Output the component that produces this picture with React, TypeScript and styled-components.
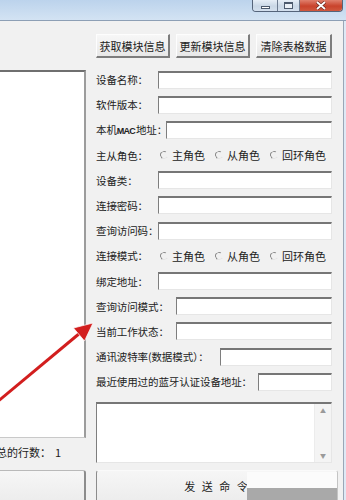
import styled, { createGlobalStyle } from 'styled-components';

const GlobalStyle = createGlobalStyle`
  * {
    box-sizing: border-box;
  }

  body {
    margin: 0;
    background: #dfe9f5;
    font-family: "Noto Sans CJK SC", "Noto Sans", sans-serif;
    color: #222;
  }
`;

const textRows = [
  { label: '设备名称：', w: 62 },
  { label: '软件版本：', w: 62 },
  { label: 'mac', w: 70 },
  { label: '主从角色：', radio: true },
  { label: '设备类：', w: 62 },
  { label: '连接密码：', w: 62 },
  { label: '查询访问码：', w: 62 },
  { label: '连接模式：', radio: true },
  { label: '绑定地址：', w: 62 },
  { label: '查询访问模式：', w: 80 },
  { label: '当前工作状态：', w: 80 },
  { label: '通讯波特率(数据模式）：', w: 124 },
  { label: '最近使用过的蓝牙认证设备地址：', w: 162 },
];

const roles = ['主角色', '从角色', '回环角色'];

export default function App() {
  return (
    <>
      <GlobalStyle />
      <Screen>
        <TitleBar>
          <Controls>
            <CtrlButton $kind='min'>
              <MinGlyph />
            </CtrlButton>
            <CtrlButton $kind='max'>
              <MaxGlyph />
            </CtrlButton>
            <CtrlButton $kind='close'>
              <svg width='12' height='9' viewBox='0 0 12 9'>
                <path d='M2 1 L10 8 M10 1 L2 8' stroke='#6b2a20' strokeWidth='3.2' />
                <path d='M2 1 L10 8 M10 1 L2 8' stroke='#fff' strokeWidth='1.8' />
              </svg>
            </CtrlButton>
          </Controls>
        </TitleBar>

        <Client>
          <LeftCol>
            <ListBox />
            <CountRow>
              <span>总的行数：</span>
              <span>1</span>
            </CountRow>
            <LeftButton />
          </LeftCol>

          <RightCol>
            <Toolbar>
              <ToolButton $w={74}>获取模块信息</ToolButton>
              <ToolButton $w={74}>更新模块信息</ToolButton>
              <ToolButton $w={76}>清除表格数据</ToolButton>
            </Toolbar>

            <Form>
              {textRows.map((row, i) =>
                row.radio ? (
                  <Row key={i}>
                    <Label $w={64}>{row.label}</Label>
                    <RadioGroup>
                      {roles.map((r) => (
                        <RadioItem key={r}>
                          <RadioDot />
                          {r}
                        </RadioItem>
                      ))}
                    </RadioGroup>
                  </Row>
                ) : (
                  <Row key={i}>
                    <Label $w={row.w ?? 62}>
                      {row.label === 'mac' ? (
                        <>
                          本机<Mac>MAC</Mac>地址：
                        </>
                      ) : (
                        row.label
                      )}
                    </Label>
                    <Field />
                  </Row>
                )
              )}
            </Form>

            <Memo>
              <ScrollBar>
                <ArrowGlyph>▲</ArrowGlyph>
                <ArrowGlyph>▼</ArrowGlyph>
              </ScrollBar>
            </Memo>

            <SendButton>发 送 命 令</SendButton>
          </RightCol>
        </Client>

        <Pointer width='346' height='500' viewBox='0 0 346 500'>
          <line x1='-4' y1='403' x2='80' y2='333' stroke='rgba(255,255,255,0.85)' strokeWidth='6' />
          <line x1='-4' y1='403' x2='80' y2='333' stroke='#d21e1e' strokeWidth='3' />
          <polygon points='93,323 84.5,341 73.5,328' fill='#d21e1e' stroke='rgba(255,255,255,0.7)' strokeWidth='1' />
        </Pointer>

        <Watermark>
          <WatermarkTop />
          <WatermarkBottom />
        </Watermark>
      </Screen>
    </>
  );
}

const Screen = styled.div`
  position: relative;
  width: 346px;
  height: 500px;
  overflow: hidden;
  display: flex;
  flex-direction: column;
`;

const TitleBar = styled.div`
  height: 21px;
  flex: none;
  display: flex;
  justify-content: flex-end;
  align-items: flex-start;
  padding-right: 3px;
  background: linear-gradient(to bottom, #bcd3ec, #d3e3f3);
  border-bottom: 1px solid #8d9fb5;
`;

const Controls = styled.div`
  display: flex;
  border: 1px solid #55647a;
  border-top: none;
  border-radius: 0 0 4px 4px;
  overflow: hidden;
  height: 12px;
`;

const CtrlButton = styled.div<{ $kind: 'min' | 'max' | 'close' }>`
  width: ${({ $kind }) => ($kind === 'close' ? '43px' : $kind === 'min' ? '24px' : '22px')};
  height: 100%;
  display: grid;
  place-items: center;
  background: ${({ $kind }) =>
    $kind === 'close'
      ? 'linear-gradient(to bottom, #e0806d, #c9432c 55%, #d0583e)'
      : 'linear-gradient(to bottom, #e6eef7, #c9d7e6 55%, #d4e0ee)'};
  border-left: ${({ $kind }) => ($kind === 'min' ? 'none' : '1px solid #6c7b90')};
`;

const MinGlyph = styled.div`
  width: 9px;
  height: 3px;
  margin-top: 3px;
  background: #fff;
  border: 1px solid #4c5a6e;
`;

const MaxGlyph = styled.div`
  width: 9px;
  height: 7px;
  border: 1px solid #4c5a6e;
  border-top-width: 2px;
  background: #e9eff6;
`;

const Client = styled.div`
  flex: 1;
  width: 344px;
  display: grid;
  grid-template-columns: 86px 1fr;
  background: #f1f1f1;
  border-right: 1px solid #9aa7b6;
`;

const LeftCol = styled.div`
  display: flex;
  flex-direction: column;
  padding-top: 49px;
`;

const ListBox = styled.div`
  height: 368px;
  margin-left: -3px;
  background: #fff;
  border-top: 2px solid #6f6f6f;
  border-left: 2px solid #6f6f6f;
  border-right: 2px solid #9c9c9c;
  border-bottom: 1px solid #c9c9c9;
`;

const CountRow = styled.div`
  height: 28px;
  display: flex;
  align-items: center;
  gap: 4px;
  margin-left: -4px;
  font-size: 11px;
  color: #222;
  white-space: nowrap;
`;

const LeftButton = styled.div`
  height: 34px;
  margin-top: 4px;
  margin-left: -3px;
  background: linear-gradient(to bottom, #f6f6f6, #ececec);
  border: 1px solid #b9b9b9;
  border-right: 2px solid #8c8c8c;
  border-radius: 0 3px 0 0;
`;

const RightCol = styled.div`
  display: flex;
  flex-direction: column;
  padding: 13px 11px 0 10px;
`;

const Toolbar = styled.div`
  display: flex;
  gap: 6px;
  height: 24px;
`;

const ToolButton = styled.div<{ $w: number }>`
  width: ${({ $w }) => $w}px;
  display: grid;
  place-items: center;
  font-size: 11px;
  color: #222;
  background: linear-gradient(to bottom, #f7f7f7, #e8e8e8);
  border: 1px solid #d4d4d4;
  border-top-color: #fdfdfd;
  border-left-color: #fdfdfd;
  border-right: 2px solid #7d7d7d;
  border-bottom: 2px solid #7d7d7d;
  white-space: nowrap;
`;

const Form = styled.div`
  display: flex;
  flex-direction: column;
  gap: 6.2px;
  margin-top: 12px;
`;

const Row = styled.div`
  display: flex;
  align-items: center;
  height: 19px;
`;

const Label = styled.div<{ $w: number }>`
  flex: none;
  width: ${({ $w }) => $w}px;
  font-size: 10.5px;
  color: #222;
  white-space: nowrap;
  letter-spacing: -0.1px;
`;

const Mac = styled.span`
  font-family: "Liberation Sans", sans-serif;
  font-size: 9px;
  font-weight: bold;
  letter-spacing: -0.8px;
  margin-right: 1px;
`;

const Field = styled.div`
  flex: 1;
  height: 18px;
  background: #fff;
  border-top: 2px solid #767676;
  border-left: 1px solid #7e7e7e;
  border-right: 1px solid #e6e6e6;
  border-bottom: 1px solid #e6e6e6;
`;

const RadioGroup = styled.div`
  display: flex;
  gap: 10px;
`;

const RadioItem = styled.div`
  display: flex;
  align-items: center;
  gap: 4px;
  font-size: 11px;
  color: #222;
  white-space: nowrap;
`;

const RadioDot = styled.span`
  width: 8px;
  height: 8px;
  border-radius: 50%;
  border: 1px solid #8a8a8a;
  border-right-color: #f1f1f1;
  border-bottom-color: #e4e4e4;
  transform: rotate(-15deg);
`;

const Memo = styled.div`
  height: 61px;
  margin-top: 11px;
  display: flex;
  justify-content: flex-end;
  background: #fff;
  border-top: 2px solid #767676;
  border-left: 1px solid #7e7e7e;
  border-right: 1px solid #e6e6e6;
  border-bottom: 1px solid #e6e6e6;
`;

const ScrollBar = styled.div`
  width: 17px;
  display: flex;
  flex-direction: column;
  justify-content: space-between;
  align-items: center;
  padding: 3px 0 2px;
  background: #f4f4f4;
  border-left: 1px solid #ececec;
`;

const ArrowGlyph = styled.span`
  font-size: 6px;
  line-height: 8px;
  color: #9a9a9a;
`;

const SendButton = styled.div`
  height: 34px;
  margin-top: 7px;
  margin-right: -6px;
  display: flex;
  justify-content: center;
  padding-top: 7px;
  font-size: 11px;
  letter-spacing: 2px;
  white-space: pre;
  color: #222;
  background: linear-gradient(to bottom, #f6f6f6, #ececec);
  border: 1px solid #c4c4c4;
  border-top-color: #fafafa;
  border-left: 1px solid #8c8c8c;
  border-radius: 3px 3px 0 0;
`;

const Pointer = styled.svg`
  position: absolute;
  inset: 0;
  pointer-events: none;
`;

const Watermark = styled.div`
  position: absolute;
  left: 247px;
  top: 472px;
  width: 90px;
  display: flex;
  flex-direction: column;
`;

const WatermarkTop = styled.div`
  height: 16px;
  background: #fbfbfb;
`;

const WatermarkBottom = styled.div`
  height: 12px;
  background: #a9a9a9;
`;
